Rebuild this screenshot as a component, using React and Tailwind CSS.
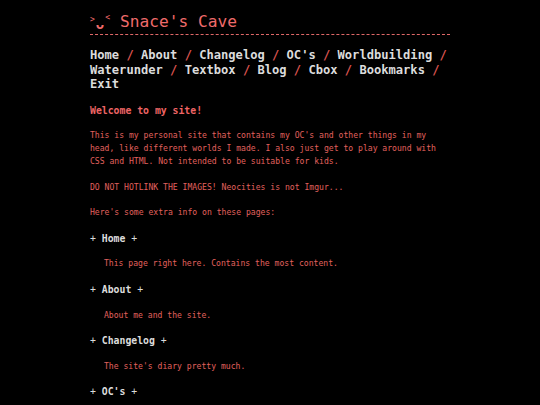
const navLinks = [
  "Home",
  "About",
  "Changelog",
  "OC's",
  "Worldbuilding",
  "Waterunder",
  "Textbox",
  "Blog",
  "Cbox",
  "Bookmarks",
  "Exit",
];

const pages = [
  { name: "Home", text: "This page right here. Contains the most content." },
  { name: "About", text: "About me and the site." },
  { name: "Changelog", text: "The site's diary pretty much." },
  { name: "OC's", text: "My original characters and their stories." },
];

const App = () => {
  return (
    <div
      className="min-h-screen bg-black"
      style={{ fontFamily: '"DejaVu Sans Mono", "Liberation Mono", monospace' }}
    >
      <div className="mx-auto w-[360px] pt-[12px] pb-10">
        <header className="border-b border-dashed border-b-[#e06868] pb-[3px]">
          <h1 className="flex items-end text-[#ef6b6b] text-[16.2px] leading-[19px]">
            <span className="flex h-[19px] w-[30px] shrink-0 items-start">
              <span className="text-[8px] leading-[8px] mt-[4px]">&gt;</span>
              <span className="text-[14px] leading-[12px] mt-[6px] mx-[1px] font-bold">ᴗ</span>
              <span className="text-[8px] leading-[8px] mt-[2px]">&lt;</span>
            </span>
            <span>Snace's Cave</span>
          </h1>
        </header>

        <nav className="mt-[13px] text-[12.1px] leading-[14.5px] font-bold text-[#dcdcdc]">
          {navLinks.map((link, i) => (
            <span key={link}>
              {link}
              {i < navLinks.length - 1 && (
                <span className="text-[#d9534f]"> / </span>
              )}
            </span>
          ))}
        </nav>

        <main className="mt-[12px] flex flex-col gap-[12.6px] text-[#e0605e] text-[8.1px] leading-[13px]">
          <h2 className="text-[#ef6565] text-[9.8px] font-bold leading-[13px]">
            Welcome to my site!
          </h2>
          <p>
            This is my personal site that contains my OC's and other things in my
            head, like different worlds I made. I also just get to play around with
            CSS and HTML. Not intended to be suitable for kids.
          </p>
          <p>DO NOT HOTLINK THE IMAGES! Neocities is not Imgur...</p>
          <p>Here's some extra info on these pages:</p>
          {pages.map((page) => (
            <div key={page.name} className="flex flex-col gap-[12.6px]">
              <h3 className="text-[#dcdcdc] text-[9.8px] leading-[13px]">
                + <span className="font-bold">{page.name}</span> +
              </h3>
              <p className="pl-[14px]">{page.text}</p>
            </div>
          ))}
        </main>
      </div>
    </div>
  );
};

export default App;
